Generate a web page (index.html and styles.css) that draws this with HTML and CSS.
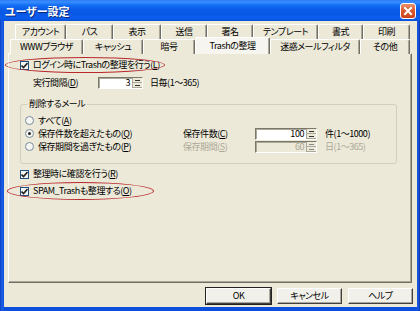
FILE: index.html
```html
<!DOCTYPE html>
<html lang="ja">
<head>
<meta charset="utf-8">
<link rel="stylesheet" href="styles.css">
</head>
<body>
<div class="window">
  <div class="titlebar">
    <span class="title">ユーザー設定</span>
    <span class="close"><svg width="14" height="14" viewBox="0 0 14 14"><path d="M4 4 L10 10 M10 4 L4 10" stroke="#fff" stroke-width="2" stroke-linecap="square"/></svg></span>
  </div>
  <div class="client">
    <div class="tabs">
      <div class="tabrow row-back">
        <span class="tab">アカウント</span>
        <span class="tab">パス</span>
        <span class="tab">表示</span>
        <span class="tab">送信</span>
        <span class="tab">署名</span>
        <span class="tab">テンプレート</span>
        <span class="tab">書式</span>
        <span class="tab">印刷</span>
      </div>
      <div class="tabrow row-front">
        <span class="tab">WWWブラウザ</span>
        <span class="tab">キャッシュ</span>
        <span class="tab">暗号</span>
        <span class="tab active">Trashの整理</span>
        <span class="tab">迷惑メールフィルタ</span>
        <span class="tab">その他</span>
      </div>
    </div>
    <div class="panel">
      <div class="check-row first">
        <span class="checkbox checked"><svg width="7" height="7" viewBox="0 0 7 7"><path d="M0.5 3.5 L2.5 5.5 L6.5 1" fill="none" stroke="#222" stroke-width="1.6"/></svg></span>
        <span>ログイン時にTrashの整理を行う(<u>L</u>)</span>
      </div>
      <div class="interval-row">
        <span class="interval-label">実行間隔(<u>D</u>)</span>
        <span class="spinbox small"><span class="val">3</span><span class="spin"><i></i><i></i></span></span>
        <span class="suffix">日毎(1～365)</span>
      </div>
      <fieldset class="group">
        <legend>削除するメール</legend>
        <div class="grid">
          <div class="radio-row"><span class="radio"></span><span>すべて(<u>A</u>)</span></div>
          <span></span><span></span><span></span>
          <div class="radio-row"><span class="radio on"></span><span>保存件数を超えたもの(<u>Q</u>)</span></div>
          <span class="glabel">保存件数(<u>C</u>)</span>
          <span class="spinbox wide"><span class="val">100</span><span class="spin"><i></i><i></i></span></span>
          <span class="gsuffix">件(1～1000)</span>
          <div class="radio-row"><span class="radio"></span><span>保存期間を過ぎたもの(<u>P</u>)</span></div>
          <span class="glabel disabled">保存期間(<u>S</u>)</span>
          <span class="spinbox wide off"><span class="val">60</span><span class="spin"><i></i><i></i></span></span>
          <span class="gsuffix disabled">日(1～365)</span>
        </div>
      </fieldset>
      <div class="check-row after-group">
        <span class="checkbox checked"><svg width="7" height="7" viewBox="0 0 7 7"><path d="M0.5 3.5 L2.5 5.5 L6.5 1" fill="none" stroke="#222" stroke-width="1.6"/></svg></span>
        <span>整理時に確認を行う(<u>R</u>)</span>
      </div>
      <div class="check-row last">
        <span class="checkbox checked"><svg width="7" height="7" viewBox="0 0 7 7"><path d="M0.5 3.5 L2.5 5.5 L6.5 1" fill="none" stroke="#222" stroke-width="1.6"/></svg></span>
        <span>SPAM_Trashも整理する(<u>O</u>)</span>
      </div>
    </div>
    <div class="buttons">
      <span class="btn default">OK</span>
      <span class="btn">キャンセル</span>
      <span class="btn">ヘルプ</span>
    </div>
  </div>
  <span class="ellipse e1"></span>
  <span class="ellipse e2"></span>
</div>
</body>
</html>
```
FILE: styles.css
```css
* { box-sizing: border-box; margin: 0; padding: 0; }
html, body { width: 420px; height: 311px; overflow: hidden; }
body {
  font-family: "Noto Sans CJK JP", "Noto Sans", sans-serif;
  font-size: 9px;
  font-feature-settings: "palt";
  letter-spacing: -0.45px;
  color: #000;
  background: #0B4FDC;
}
u { text-decoration: underline; text-underline-offset: 1px; }

.window {
  position: relative;
  width: 420px;
  height: 311px;
  display: flex;
  flex-direction: column;
  background: linear-gradient(to right, #0A3FC2 0, #1E62E8 2px, #0B4FDC 4px, #0B4FDC 416px, #1A5AE0 418px, #0833B0 420px);
}

.titlebar {
  height: 21px;
  flex: none;
  display: flex;
  align-items: center;
  padding: 0 4px 0 5px;
  background: linear-gradient(to bottom, #2C7CF6 0, #3A8EFF 2px, #1470F5 5px, #0A5DE8 9px, #0857E4 14px, #0B5EEE 18px, #0A50D8 21px);
}
.title {
  color: #fff;
  font-weight: bold;
  font-size: 11px;
  line-height: 12px;
  letter-spacing: 0;
  text-shadow: 1px 1px 0 #0A2A80;
}
.close {
  margin-left: auto;
  width: 16px;
  height: 16px;
  margin-top: 1px;
  border: 1px solid #fff;
  border-radius: 3px;
  background: linear-gradient(to bottom, #E9906C, #D9562E 50%, #C8441E);
  display: flex;
  align-items: center;
  justify-content: center;
}

.client {
  flex: 1;
  margin: 0 3px 4px 4px;
  background: #ECE9D8;
  display: flex;
  flex-direction: column;
}

.tabs { padding-top: 3px; }
.tabrow {
  display: grid;
  position: relative;
}
.row-back {
  height: 15px;
  margin-left: 11px;
  grid-template-columns: 51px 47px 48px 46px 46px 65px 45px 47px;
}
.row-front {
  height: 14px;
  margin-left: 6px;
  grid-template-columns: 73px 60px 52px 75px 90px 50px;
  z-index: 2;
}
.tab {
  display: flex;
  align-items: center;
  justify-content: center;
  border-left: 1px solid #fff;
  border-top: 1px solid #fff;
  border-right: 1px solid #716F64;
  box-shadow: inset -1px 0 0 #ACA899;
  border-radius: 2px 2px 0 0;
  line-height: 10px;
  white-space: nowrap;
  background: #ECE9D8;
}
.tab.active {
  background: #F6F5EF;
  margin-top: -2px;
  height: 17px;
}

.panel {
  margin-left: 4px;
  width: 404px;
  height: 230px;
  border: 1px solid;
  border-color: #fff #716F64 #716F64 #fff;
  box-shadow: inset -1px -1px 0 #ACA899;
  padding-left: 11px;
  display: flex;
  flex-direction: column;
  position: relative;
  z-index: 1;
}

.check-row {
  height: 14px;
  display: flex;
  align-items: center;
  gap: 4px;
  line-height: 10px;
}
.check-row.first { margin-top: 4px; }
.check-row.after-group { margin-top: 3px; }
.check-row.last { margin-top: 3px; }

.checkbox {
  width: 9px;
  height: 9px;
  flex: none;
  border: 1px solid #1C5180;
  background: #F4F4F0;
  display: flex;
  align-items: center;
  justify-content: center;
}

.interval-row {
  margin-top: 4px;
  margin-left: 13px;
  height: 14px;
  display: flex;
  align-items: center;
  line-height: 10px;
}
.interval-label { width: 65px; }
.suffix { margin-left: 7px; }

.spinbox {
  height: 12px;
  display: flex;
  background: #fff;
  border: 1px solid;
  border-color: #7A7868 #fff #fff #7A7868;
  box-shadow: inset 1px 1px 0 #ACA899;
}
.spinbox.small { width: 45px; }
.spinbox.wide { width: 62px; }
.spinbox .val {
  flex: 1;
  text-align: right;
  padding-right: 2px;
  line-height: 10px;
}
.spin {
  width: 10px;
  display: flex;
  flex-direction: column;
  background: #ECE9D8;
  border-left: 1px solid #ACA899;
}
.spin i {
  flex: 1;
  position: relative;
  border-bottom: 1px solid #ACA899;
}
.spin i::after {
  content: "";
  position: absolute;
  left: 2px;
  right: 2px;
  top: 2px;
  height: 1px;
  background: #333;
}
.spinbox.off { background: #ECE9D8; color: #ACA899; }
.spinbox.off .spin i::after { background: #888; }

.group {
  margin-top: 8px;
  width: 377px;
  border: 1px solid #D0D0BF;
  border-radius: 3px;
  padding: 4px 0 10px 4px;
  min-inline-size: 0;
}
.group legend {
  margin-left: 2px;
  padding: 0 2px;
  line-height: 12px;
}
.grid {
  display: grid;
  grid-template-columns: 158px 72px 62px auto;
  grid-auto-rows: 13px;
  align-items: center;
  line-height: 10px;
}
.radio-row {
  display: flex;
  align-items: center;
  gap: 4px;
}
.radio {
  width: 9px;
  height: 9px;
  flex: none;
  border: 1px solid #7A8C9C;
  border-radius: 50%;
  background: #F6F6F2;
  position: relative;
}
.radio.on::after {
  content: "";
  position: absolute;
  left: 2px;
  top: 2px;
  width: 3px;
  height: 3px;
  border-radius: 50%;
  background: #222;
}
.gsuffix { margin-left: 8px; white-space: nowrap; }
.disabled { color: #ACA899; }

.buttons {
  margin-top: 5px;
  padding-right: 4px;
  display: flex;
  justify-content: flex-end;
  gap: 6px;
}
.btn {
  width: 65px;
  height: 16px;
  display: flex;
  align-items: center;
  justify-content: center;
  background: #F1F0EA;
  border: 1px solid;
  border-color: #fff #404040 #404040 #fff;
  box-shadow: inset -1px -1px 0 #ACA899;
  line-height: 10px;
}
.btn.default { outline: 1px solid #222; }

.ellipse {
  position: absolute;
  border: 1.5px solid #B8282C;
  border-radius: 50%;
  z-index: 5;
}
.e1 { left: 5px; top: 57px; width: 160px; height: 16px; }
.e2 { left: 7px; top: 182px; width: 147px; height: 18px; }
```
